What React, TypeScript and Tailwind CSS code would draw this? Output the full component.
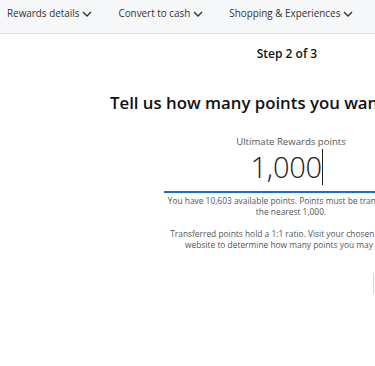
import React from "react";

function Chevron() {
  return (
    <svg width="10" height="6" viewBox="0 0 10 6" className="ml-[3px] mt-[1px]" fill="none">
      <path d="M1 1l4 4 4-4" stroke="#333" strokeWidth="1.4" />
    </svg>
  );
}

function NavItem({ label, className }: { label: string; className?: string }) {
  return (
    <div className={"flex items-center whitespace-nowrap text-[9.9px] text-[#333] " + (className ?? "")}>
      <span>{label}</span>
      <Chevron />
    </div>
  );
}

export default function App() {
  return (
    <div
      className="w-[375px] h-[366px] overflow-hidden bg-white"
      style={{ fontFamily: '"Open Sans", "Noto Sans", sans-serif' }}
    >
      <div className="h-[34px] w-[375px] bg-[#f6f7f8] border-b border-[#dcdde0] flex items-center pl-[7px] pb-[6px]">
        <NavItem label="Rewards details" />
        <NavItem label="Convert to cash" className="ml-[26px]" />
        <NavItem label="Shopping & Experiences" className="ml-[26px]" />
      </div>
      <div className="w-[582px] flex flex-col items-center">
        <div className="mt-[11px] mr-[8px] text-[12px] font-semibold text-[#111] leading-[18px]">Step 2 of 3</div>
      </div>
      <div className="mt-[28px] ml-[110px] text-[16.8px] font-semibold text-[#111] whitespace-nowrap leading-[24px]">
        Tell us how many points you want to transfer
      </div>
      <div className="w-[582px] flex flex-col items-center">
        <div className="mt-[20px] text-[9.6px] text-[#555] leading-[13px]">Ultimate Rewards points</div>
        <div className="w-[254px] h-[45px] border-b-2 border-[#1a6fcc] flex justify-center items-start pt-[1px]">
          <div className="flex items-center ml-[-8px]">
            <span className="text-[29px] font-light text-[#222] leading-[36px] tracking-[-0.2px]">1,000</span>
            <span className="w-[1.5px] h-[36px] bg-[#222]" />
          </div>
        </div>
        <div className="w-[300px] mt-[2px] text-[8.4px] leading-[11px] text-[#555] text-center">
          You have 10,603 available points. Points must be transferred to
          <br />
          the nearest 1,000.
        </div>
        <div className="w-[300px] mt-[11px] text-[8.4px] leading-[11px] text-[#555] text-center">
          Transferred points hold a 1:1 ratio. Visit your chosen partner's
          <br />
          website to determine how many points you may need.
        </div>
      </div>
      <div className="ml-[373px] mt-[23px] w-[40px] h-[21px] border-l border-[#d3d8e6]" />
    </div>
  );
}
